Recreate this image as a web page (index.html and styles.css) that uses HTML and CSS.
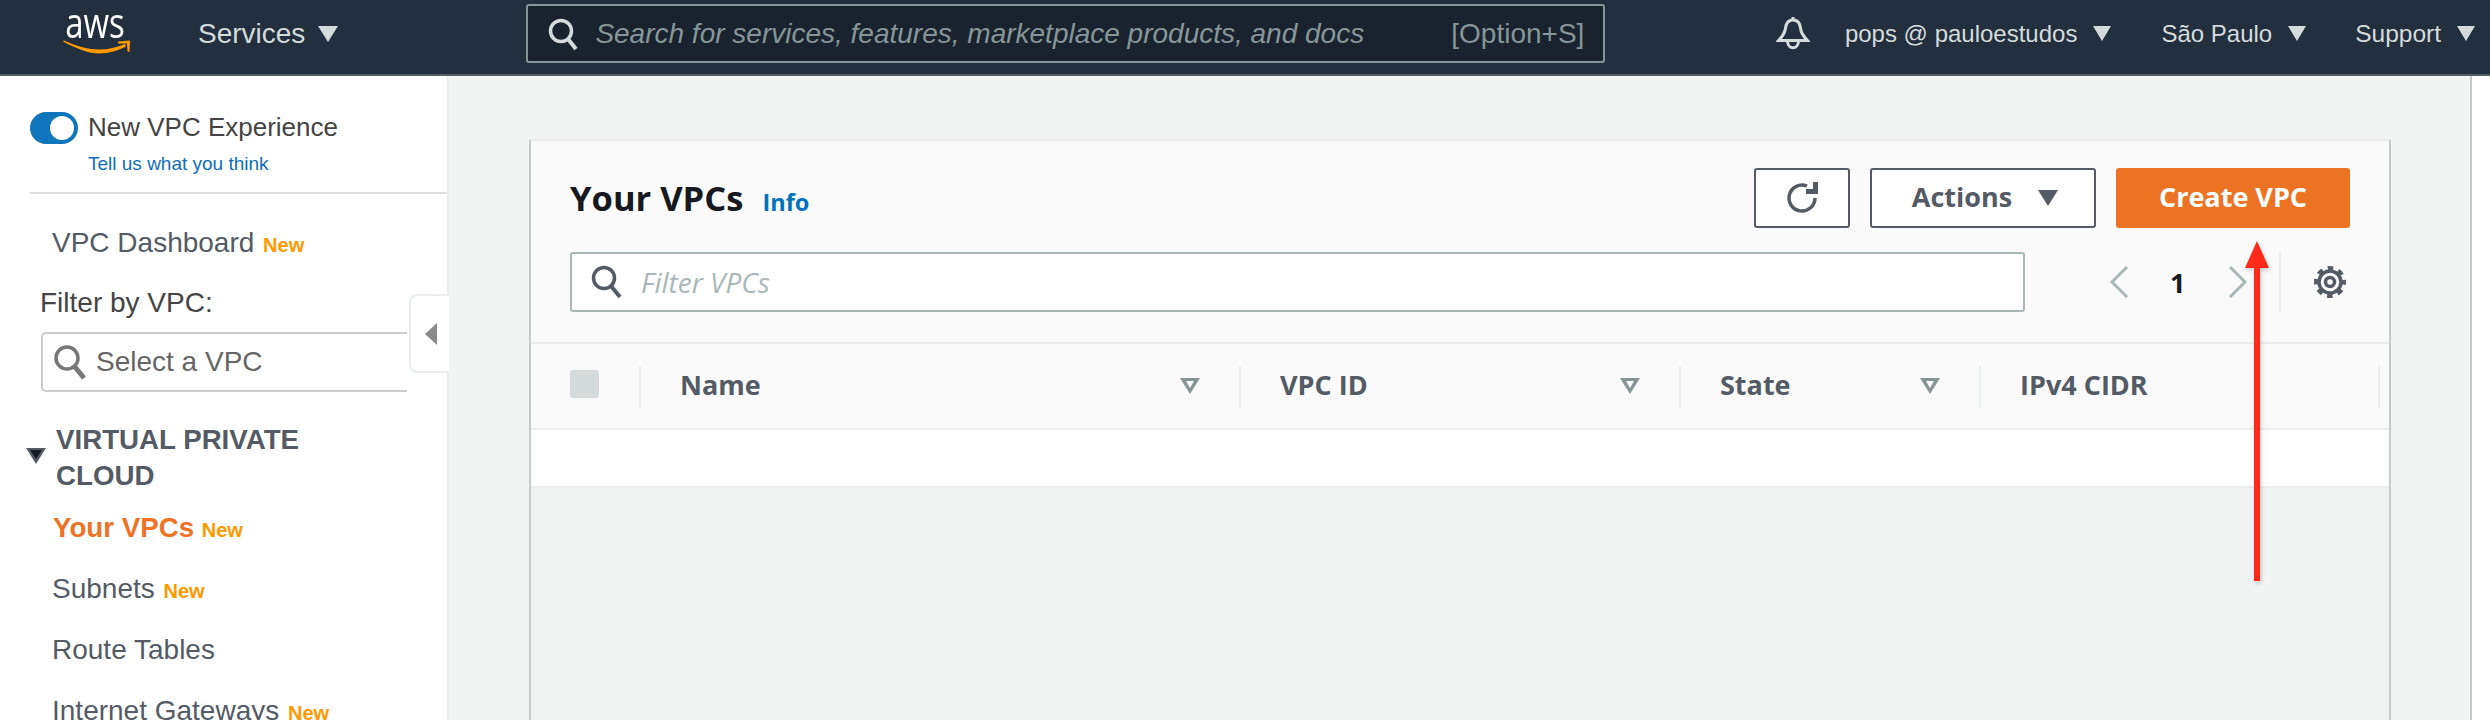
FILE: index.html
```html
<!DOCTYPE html>
<html lang="en">
<head>
<meta charset="utf-8">
<title>Your VPCs</title>
<link rel="stylesheet" href="styles.css">
</head>
<body>
<header class="topbar">
  <div class="logo">
    <span class="logo-text">aws</span>
    <svg class="logo-smile" width="68" height="14" viewBox="0 0 68 14"><path d="M0 1.5C14 9 26 13.5 36 13.5C46 13.5 55 10.5 63 6.5L62 4C54 7.5 45 9.5 36 9.5C26 9.5 14 6.5 1 0.5Z" fill="#f90"/><path d="M55 1.5L67 0.5L66.5 12L64.5 11.5L64 3.5L55 3.5Z" fill="#f90"/></svg>
  </div>
  <div class="nav-item services">Services<span class="caret"></span></div>
  <div class="global-search">
    <svg class="g-icon" width="32" height="34" viewBox="0 0 32 34"><circle cx="14" cy="14" r="10.5" fill="none" stroke="#d5dbdb" stroke-width="3.5"/><path d="M21 22L29 32" stroke="#d5dbdb" stroke-width="4"/></svg>
    <span class="g-placeholder">Search for services, features, marketplace products, and docs</span>
    <span class="g-shortcut">[Option+S]</span>
  </div>
  <div class="top-right">
    <svg class="bell" width="34" height="34" viewBox="0 0 34 34"><path d="M17 3C12 3 10 7 9.5 11C9 16 6 20 2.5 23.5H31.5C28 20 25 16 24.5 11C24 7 22 3 17 3Z" fill="none" stroke="#d5dbdb" stroke-width="3"/><path d="M17 0V3" stroke="#d5dbdb" stroke-width="3"/><path d="M11.5 24C11.5 33 22.5 33 22.5 24" fill="none" stroke="#d5dbdb" stroke-width="3"/></svg>
    <div class="nav-item user">pops @ pauloestudos<span class="caret"></span></div>
    <div class="nav-item region">São Paulo<span class="caret"></span></div>
    <div class="nav-item support">Support<span class="caret"></span></div>
  </div>
</header>

<div class="app">
  <aside class="sidebar">
    <div class="experience">
      <div class="exp-row">
        <span class="switch"><span class="knob"></span></span>
        <span class="exp-title">New VPC Experience</span>
      </div>
      <a class="exp-link">Tell us what you think</a>
    </div>
    <div class="side-link dash">VPC Dashboard <span class="new">New</span></div>
    <div class="filter-label">Filter by VPC:</div>
    <div class="select-vpc">
      <svg width="34" height="36" viewBox="0 0 34 36"><circle cx="14" cy="14" r="11" fill="#fff" stroke="#777" stroke-width="3.5"/><path d="M22 23L31 34" stroke="#777" stroke-width="5"/></svg>
      <span>Select a VPC</span>
    </div>
    <div class="section-head">
      <span class="section-caret"></span>
      <span class="section-title">VIRTUAL PRIVATE CLOUD</span>
    </div>
    <div class="side-link active">Your VPCs <span class="new">New</span></div>
    <div class="side-link">Subnets <span class="new">New</span></div>
    <div class="side-link">Route Tables</div>
    <div class="side-link">Internet Gateways <span class="new">New</span></div>
  </aside>
  <div class="collapse"><span class="collapse-tri"></span></div>

  <main class="main">
    <section class="card">
      <div class="card-head">
        <div class="head-row">
          <h1 class="title">Your VPCs</h1>
          <a class="info">Info</a>
          <div class="actions">
            <button class="btn refresh">
              <svg width="34" height="34" viewBox="0 0 34 34"><path d="M22 5A13 13 0 1 0 30 17" fill="none" stroke="#545b64" stroke-width="3.5"/><path d="M21 8H28V1H33V13H21Z" fill="#545b64"/></svg>
            </button>
            <button class="btn act">Actions<span class="caret dark"></span></button>
            <button class="btn primary">Create VPC</button>
          </div>
        </div>
        <div class="filter-row">
          <div class="filter">
            <svg width="32" height="34" viewBox="0 0 32 34"><circle cx="13" cy="13" r="10.5" fill="none" stroke="#545b64" stroke-width="3.5"/><path d="M20 21L29 32" stroke="#545b64" stroke-width="4"/></svg>
            <span>Filter VPCs</span>
          </div>
          <svg class="chev-l" width="20" height="32" viewBox="0 0 20 32"><path d="M18 1L3 16L18 31" fill="none" stroke="#aab7b8" stroke-width="3"/></svg>
          <span class="page">1</span>
          <svg class="chev-r" width="20" height="32" viewBox="0 0 20 32"><path d="M2 1L17 16L2 31" fill="none" stroke="#aab7b8" stroke-width="3"/></svg>
          <span class="pager-sep"></span>
          <svg class="gear" width="34" height="34" viewBox="0 0 34 34"><circle cx="17" cy="17" r="11" fill="none" stroke="#545b64" stroke-width="3.5"/><circle cx="17" cy="17" r="14" fill="none" stroke="#545b64" stroke-width="4" stroke-dasharray="5.5 5.5" stroke-dashoffset="2.75"/><circle cx="17" cy="17" r="4.5" fill="none" stroke="#545b64" stroke-width="3.5"/></svg>
        </div>
      </div>
      <div class="thead">
        <span class="checkbox"></span>
        <div class="th th-name">Name<span class="sort"></span></div>
        <div class="th th-id">VPC ID<span class="sort"></span></div>
        <div class="th th-state">State<span class="sort"></span></div>
        <div class="th th-cidr">IPv4 CIDR</div>
      </div>
      <div class="empty-row"></div>
    </section>
  </main>
  <div class="right-rail"></div>
</div>

<svg class="annotation" width="30" height="344" viewBox="0 0 30 344"><path d="M15 0L27 27H18V340H12V27H3Z" fill="#ff2a1a"/></svg>
</body>
</html>
```
FILE: styles.css
```css
* { box-sizing: border-box; }
html, body { margin: 0; padding: 0; height: 720px; overflow: hidden; background: #f2f3f3; }
body { font-family: "Liberation Sans", Arial, sans-serif; color: #545b64; }

.topbar { height: 76px; background: #232f3e; border-bottom: 2px solid #545b64; display: flex; align-items: center; color: #d5dbdb; font-size: 28px; padding: 0 15px 7px 63px; }
.logo { width: 68px; height: 39px; display: flex; flex-direction: column; align-items: center; justify-content: space-between; margin-top: 1px; }
.logo-text { font-family: "Open Sans", sans-serif; color: #fff; font-size: 33px; line-height: 33px; margin: -5.5px 0 -5.5px -4px; transform: scaleY(1.25); transform-origin: 50% 29px; }
.logo-smile { flex: none; }
.nav-item { display: flex; align-items: center; white-space: nowrap; }
.services { margin-left: 67px; }
.caret { display: inline-block; width: 0; height: 0; border-left: 10px solid transparent; border-right: 10px solid transparent; border-top: 16px solid #d5dbdb; margin-left: 13px; }
.caret.dark { border-top-color: #545b64; margin-left: 26px; }
.global-search { margin-left: 188px; width: 1079px; height: 59px; background: #1a222d; border: 2px solid #879596; border-radius: 3px; display: flex; align-items: center; padding-left: 19px; font-size: 28px; color: #879596; }
.g-icon { flex: none; }
.g-placeholder { font-style: italic; margin-left: 16px; white-space: nowrap; }
.g-shortcut { margin-left: auto; margin-right: 19px; white-space: nowrap; }
.top-right { display: flex; align-items: center; margin-left: auto; }
.bell { flex: none; }
.top-right .nav-item { font-size: 24px; }
.top-right .support { font-size: 24.5px; }
.top-right .caret { width: 0; border-left-width: 9px; border-right-width: 9px; border-top-width: 15px; margin-left: 16px; }
.user { margin-left: 35px; }
.region { margin-left: 50px; }
.support { margin-left: 49px; }

.app { display: flex; height: 644px; position: relative; }
.sidebar { width: 449px; flex: none; background: #fff; overflow: hidden; font-size: 28px; padding-top: 30px; border-right: 2px solid #eaeded; }
.experience { height: 88px; margin-left: 30px; border-bottom: 2px solid #ddd; padding-top: 6px; width: 419px; }
.exp-row { display: flex; align-items: center; height: 32px; }
.switch { width: 48px; height: 32px; background: #0f75bc; border-radius: 16px; display: flex; align-items: center; justify-content: flex-end; padding-right: 4px; flex: none; }
.knob { width: 24px; height: 24px; background: #fff; border-radius: 50%; }
.exp-title { margin-left: 10px; color: #444; white-space: nowrap; font-size: 26px; line-height: 28px; margin-top: -3px; }
.exp-link { display: block; margin: 8px 0 0 58px; font-size: 19px; line-height: 24px; color: #0f6ebd; white-space: nowrap; }
.side-link { margin-left: 52px; height: 38px; line-height: 38px; margin-top: 23px; white-space: nowrap; color: #545b64; }
.dash { margin-top: 30px; }
.new { font-size: 20px; font-weight: bold; color: #ff9900; margin-left: 1px; line-height: 1; }
.filter-label { margin: 22px 0 0 40px; line-height: 38px; color: #444; }
.select-vpc { margin: 10px 0 0 41px; width: 366px; height: 60px; border: 2px solid #ccc; border-right: 0; border-radius: 5px 0 0 5px; display: flex; align-items: center; padding-left: 10px; color: #666; }
.select-vpc span { margin-left: 9px; }
.section-head { position: relative; margin: 30px 0 0 56px; width: 340px; font-size: 27.7px; line-height: 36px; font-weight: bold; color: #545b64; }
.section-caret { position: absolute; left: -30px; top: 26px; width: 0; height: 0; border-left: 10px solid transparent; border-right: 10px solid transparent; border-top: 16px solid #545b64; }
.section-caret::after { content: ""; position: absolute; left: -6px; top: -14px; width: 0; height: 0; border-left: 6px solid transparent; border-right: 6px solid transparent; border-top: 9px solid #16191f; }
.side-link.active { margin-top: 15px; margin-left: 53px; color: #ee7326; font-weight: bold; font-size: 27.7px; }
.side-link.active .new { margin-left: 0; }
.collapse { position: absolute; left: 409px; top: 218px; width: 40px; height: 79px; background: #fff; border: 2px solid #eaeded; border-right: 0; border-radius: 8px 0 0 8px; display: flex; align-items: center; padding-left: 14px; }
.collapse-tri { width: 0; height: 0; border-top: 11px solid transparent; border-bottom: 11px solid transparent; border-right: 12px solid #8a8a8a; }

.main { flex: 1; padding: 63px 79px 0 80px; min-width: 0; }
.card { height: 100%; border-left: 2px solid #c4cccc; border-right: 2px solid #c4cccc; border-top: 2px solid #eaeded; display: flex; flex-direction: column; }
.card-head { background: #fafafa; padding: 27px 39px 30px 39px; border-bottom: 2px solid #eaeded; }
.head-row { display: flex; align-items: center; height: 60px; }
.title { font-family: "Open Sans", sans-serif; font-size: 34.5px; font-weight: 700; color: #16191f; margin: -2px 0 0; }
.info { font-family: "Open Sans", sans-serif; font-size: 23.5px; font-weight: 700; color: #0073bb; margin-left: 19px; padding-top: 8px; }
.actions { margin-left: auto; display: flex; gap: 20px; }
.btn { height: 60px; border: 2px solid #545b64; border-radius: 3px; background: #fff; font-family: "Open Sans", sans-serif; font-size: 27px; font-weight: 700; color: #545b64; display: flex; align-items: center; justify-content: center; padding: 0 0 3px; }
.refresh { width: 96px; padding: 0; }
.act { width: 226px; padding-left: 4px; }
.act .caret { margin-top: 3px; }
.primary { width: 234px; background: #ec7224; border-color: #ec7224; color: #fff; }
.filter-row { display: flex; align-items: center; margin-top: 24px; height: 60px; }
.filter { width: 1455px; height: 60px; background: #fff; border: 2px solid #aab7b8; border-radius: 3px; display: flex; align-items: center; padding-left: 19px; font-family: "Open Sans", sans-serif; font-style: italic; font-size: 28px; color: #aab7b8; }
.filter span { margin-left: 18px; }
.chev-l { margin-left: 84px; flex: none; }
.page { font-family: "Open Sans", sans-serif; font-weight: 700; font-size: 27px; color: #16191f; margin-left: 41px; width: 17px; }
.chev-r { margin-left: 41px; flex: none; }
.pager-sep { width: 2px; height: 60px; background: #eaeded; margin-left: 31px; }
.gear { margin-left: 32px; flex: none; }

.thead { background: #fafafa; height: 86px; border-bottom: 2px solid #eaeded; padding: 22px 0 0 39px; display: flex; align-items: flex-start; }
.checkbox { width: 29px; height: 28px; background: #d5dbdb; border-radius: 3px; margin-top: 4px; flex: none; margin-right: 40px; }
.th { height: 42px; border-left: 2px solid #eaeded; font-family: "Open Sans", sans-serif; font-size: 27px; font-weight: 700; color: #545b64; display: flex; align-items: center; justify-content: space-between; padding: 0 39px 5px; flex: none; line-height: 36px; }
.th-name { width: 600px; }
.th-id { width: 440px; }
.th-state { width: 300px; }
.th-cidr { width: 401px; border-right: 2px solid #eaeded; }
.sort { width: 0; height: 0; border-left: 10px solid transparent; border-right: 10px solid transparent; border-top: 16px solid #879596; position: relative; top: 1px; }
.sort::after { content: ""; position: absolute; left: -4px; top: -13px; width: 0; height: 0; border-left: 4px solid transparent; border-right: 4px solid transparent; border-top: 7px solid #fafafa; }
.empty-row { height: 58px; background: #fff; border-bottom: 2px solid #eaeded; }

.right-rail { width: 20px; flex: none; background: #fff; border-left: 2px solid #c4cccc; }
.annotation { position: absolute; left: 2242px; top: 241px; filter: drop-shadow(1px 2px 2px rgba(0,0,0,.2)); }
```
